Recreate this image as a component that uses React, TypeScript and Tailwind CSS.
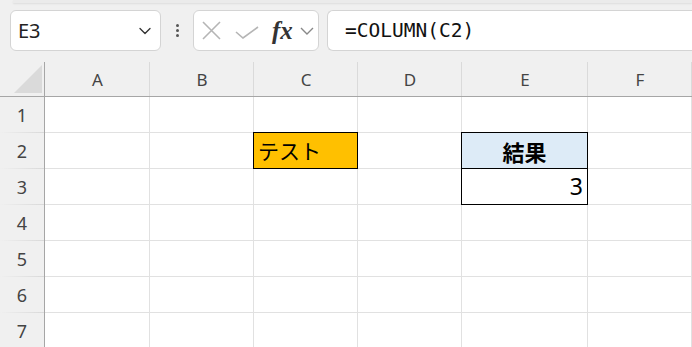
import React from "react";
import { ChevronDown } from "lucide-react";

const cols = ["A", "B", "C", "D", "E", "F"];
const widths = ["w-[105px]", "w-[104px]", "w-[104px]", "w-[104px]", "w-[126px]", "w-[104px]"];

function Cell({ r, c }: { r: number; c: number }) {
  const base = `relative h-[36px] shrink-0 border-r border-b border-[#e1e1e1] ${widths[c]}`;
  if (r === 2 && c === 2) {
    return (
      <div className={`${base} bg-[#ffc000]`}>
        <div className="absolute -left-px -top-px -right-px -bottom-px border border-black" />
        <div className="flex h-full items-center pl-[4px] text-[21px] leading-none text-black [font-family:'Noto_Sans_CJK_JP',sans-serif]">
          テスト
        </div>
      </div>
    );
  }
  if (r === 2 && c === 4) {
    return (
      <div className={`${base} bg-[#ddebf7]`}>
        <div className="absolute -left-px -top-px -right-px -bottom-px border border-black" />
        <div className="flex h-full items-center justify-center text-[22px] font-bold leading-none text-black [font-family:'Noto_Sans_CJK_JP',sans-serif]">
          結果
        </div>
      </div>
    );
  }
  if (r === 3 && c === 4) {
    return (
      <div className={`${base} bg-white`}>
        <div className="absolute -left-px -top-px -right-px -bottom-px border border-black" />
        <div className="flex h-full items-center justify-end pr-[4px] text-[23px] leading-none text-black [font-family:'Noto_Sans',sans-serif]">
          3
        </div>
      </div>
    );
  }
  return <div className={`${base} bg-white`} />;
}

export default function App() {
  return (
    <div className="h-[347px] w-[692px] overflow-hidden bg-[#f0f0f0] [font-family:'Noto_Sans',sans-serif]">
      {/* top ribbon edge */}
      <div className="relative h-0">
        <div className="absolute left-[13px] right-0 top-0 h-[3px] bg-[#ebebeb] shadow-[0_1px_2px_rgba(0,0,0,0.08)]" />
      </div>
      {/* formula bar */}
      <div className="flex h-[62px] items-start pl-[10px] pt-[10px]">
        <div className="flex h-[41px] w-[151px] shrink-0 items-center justify-between rounded-[6px] border border-[#d4d4d4] bg-white pl-[7px] pr-[5px]">
          <span className="text-[20px] leading-none text-[#222]">E3</span>
          <ChevronDown size={20} strokeWidth={1.6} className="text-[#333]" />
        </div>
        <div className="flex h-[41px] w-[32px] shrink-0 flex-col items-center justify-center gap-[2px]">
          <span className="h-[3px] w-[3px] rounded-full bg-[#555]" />
          <span className="h-[3px] w-[3px] rounded-full bg-[#555]" />
          <span className="h-[3px] w-[3px] rounded-full bg-[#555]" />
        </div>
        <div className="flex h-[41px] w-[126px] shrink-0 items-center rounded-[6px] border border-[#d4d4d4] bg-white pl-[8px]">
          <svg width="19" height="19" viewBox="0 0 19 19" className="shrink-0">
            <path d="M1 1 L18 18 M18 1 L1 18" stroke="#b5b5b5" strokeWidth="1.6" fill="none" />
          </svg>
          <svg width="24" height="13" viewBox="0 0 24 13" className="ml-[14px] mt-[4px] shrink-0">
            <path d="M1 6 L8 12 L23 1" stroke="#b5b5b5" strokeWidth="1.6" fill="none" />
          </svg>
          <span className="ml-[13px] text-[25px] font-bold italic leading-none text-[#333] [font-family:'Liberation_Serif',serif]">
            fx
          </span>
          <svg width="14" height="9" viewBox="0 0 14 9" className="ml-[7px] mt-[2px] shrink-0">
            <path d="M1 1 L7 7 L13 1" stroke="#888" strokeWidth="1.4" fill="none" />
          </svg>
        </div>
        <div className="ml-[8px] flex h-[41px] flex-1 items-center rounded-l-[6px] border border-r-0 border-[#d4d4d4] bg-white pl-[17px]">
          <span className="text-[19.5px] leading-none text-[#111] [font-family:'DejaVu_Sans_Mono',monospace]">
            =COLUMN(C2)
          </span>
        </div>
      </div>
      {/* column header */}
      <div className="flex h-[35px]">
        <div className="relative h-[35px] w-[45px] shrink-0 border-r border-b border-[#a6a6a6]">
          <svg width="28" height="28" viewBox="0 0 28 28" className="absolute left-[14px] top-[3px]">
            <polygon points="28,0 28,28 0,28" fill="#dadada" />
          </svg>
        </div>
        {cols.map((c, i) => (
          <div
            key={c}
            className={`relative flex h-[35px] shrink-0 items-center justify-center border-b border-[#a6a6a6] ${widths[i]}`}
          >
            <span className="text-[17px] leading-none text-[#444]">{c}</span>
            <div className="absolute right-0 top-0 h-[34px] w-px bg-[#dadada]" />
          </div>
        ))}
      </div>
      {/* rows */}
      {[1, 2, 3, 4, 5, 6, 7].map((r) => (
        <div key={r} className="flex h-[36px]">
          <div className="relative flex h-[36px] w-[45px] shrink-0 items-center justify-center border-r border-[#a6a6a6]">
            <span className="text-[18px] leading-none text-[#444]">{r}</span>
            <div className="absolute bottom-0 left-0 right-0 h-px bg-gradient-to-r from-[#f0f0f0] to-[#d9d9d9]" />
          </div>
          {cols.map((_, c) => (
            <Cell key={c} r={r} c={c} />
          ))}
        </div>
      ))}
    </div>
  );
}
